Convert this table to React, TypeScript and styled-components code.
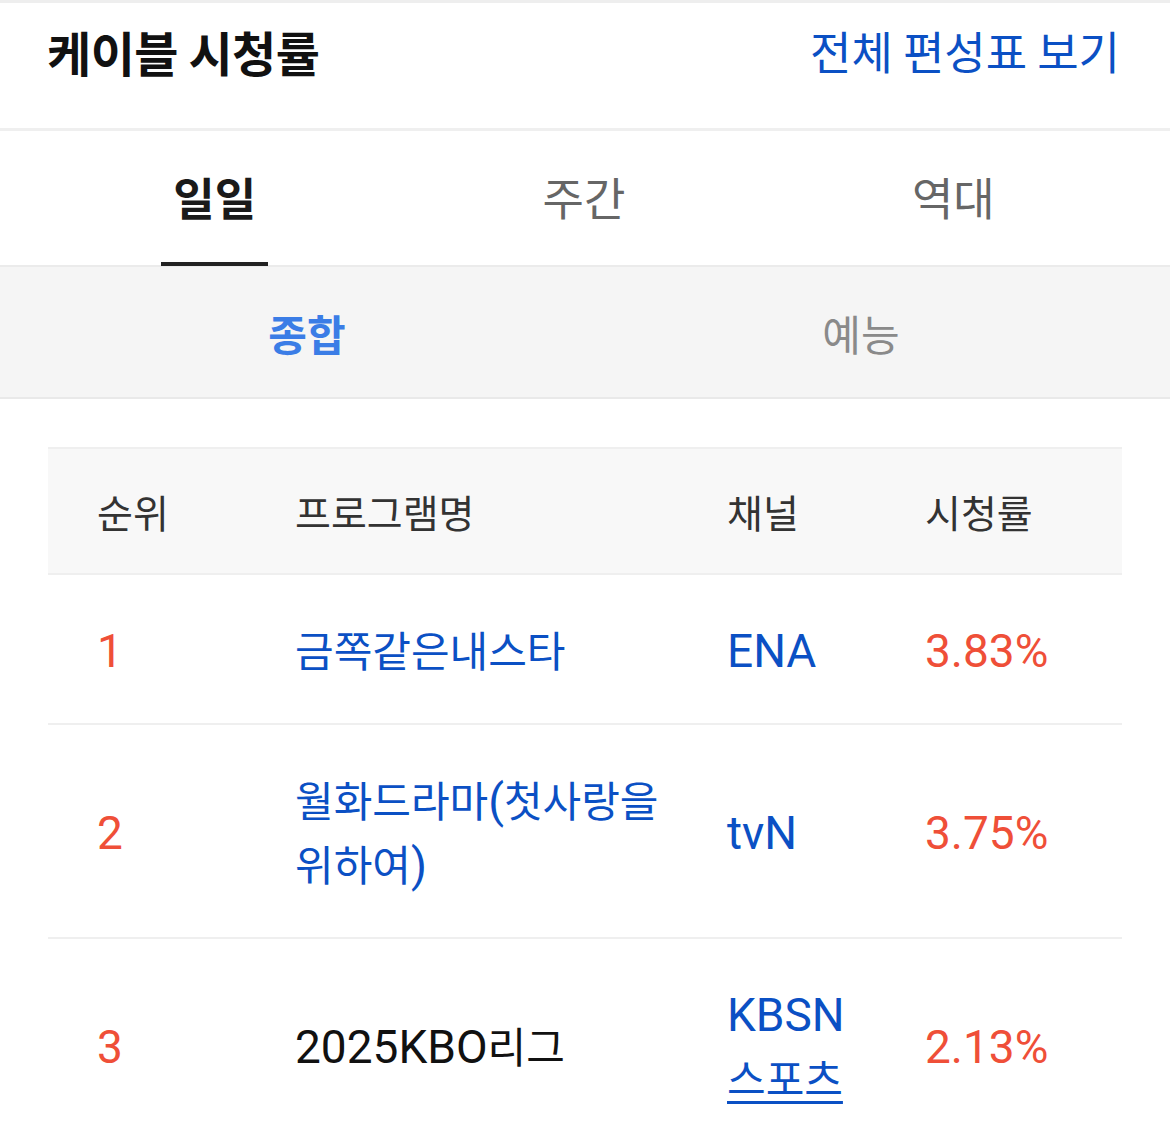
import React from "react";
import styled, { createGlobalStyle } from "styled-components";

const Global = createGlobalStyle`
  html, body { margin: 0; padding: 0; background: #ffffff; }
  body { font-family: "Roboto", "Noto Sans CJK KR", sans-serif; -webkit-font-smoothing: antialiased; }
  * { box-sizing: border-box; }
`;

const Page = styled.div`
  width: 1170px;
  min-height: 1133px;
  background: #fff;
  border-top: 3px solid #eeeeee;
`;

const Header = styled.header`
  height: 128px;
  display: flex;
  align-items: center;
  justify-content: space-between;
  padding: 0 50px 0 47px;
  border-bottom: 3px solid #efefef;
`;

const Title = styled.h1`
  margin: 0;
  font-family: "Noto Sans CJK KR", sans-serif;
  font-size: 48px;
  font-weight: 700;
  color: #111;
  letter-spacing: -0.5px;
  padding-bottom: 30px;
`;

const HeaderLink = styled.a`
  font-family: "Noto Sans CJK KR", sans-serif;
  font-size: 45px;
  font-weight: 400;
  color: #0b50c4;
  text-decoration: none;
  padding-bottom: 30px;
`;

const TabBar = styled.nav`
  display: flex;
  height: 136px;
  padding: 0 32px 0 30px;
  border-bottom: 2px solid #ebebeb;
`;

const Tab = styled.div<{ $active?: boolean }>`
  flex: 1;
  position: relative;
  display: flex;
  align-items: center;
  justify-content: center;
  padding-bottom: 4px;
  font-family: "Noto Sans CJK KR", sans-serif;
  font-size: 45px;
  font-weight: ${(p) => (p.$active ? 700 : 400)};
  color: ${(p) => (p.$active ? "#1a1a1a" : "#666")};
  &::after {
    content: "";
    display: ${(p) => (p.$active ? "block" : "none")};
    position: absolute;
    left: 50%;
    bottom: -1px;
    width: 107px;
    margin-left: -54px;
    height: 4px;
    background: #222;
  }
`;

const SubBar = styled.div`
  display: flex;
  height: 132px;
  padding: 0 32px 0 30px;
  background: #f5f5f5;
  border-bottom: 2px solid #e9e9e9;
`;

const SubTab = styled.div<{ $active?: boolean }>`
  flex: 1;
  display: flex;
  align-items: center;
  justify-content: center;
  font-family: "Noto Sans CJK KR", sans-serif;
  font-size: 42px;
  font-weight: ${(p) => (p.$active ? 700 : 400)};
  color: ${(p) => (p.$active ? "#3b7de6" : "#8a8a8a")};
`;

const Table = styled.div`
  margin: 48px 48px 0 48px;
  border-top: 2px solid #efefef;
`;

const Row = styled.div<{ $head?: boolean }>`
  display: grid;
  grid-template-columns: 198px 432px 198px 246px;
  align-items: center;
  background: ${(p) => (p.$head ? "#f8f8f8" : "#fff")};
  border-bottom: 2px solid #efefef;
  min-height: ${(p) => (p.$head ? "126px" : "148px")};
`;

const HeadCell = styled.div`
  padding-left: 49px;
  font-family: "Noto Sans CJK KR", sans-serif;
  font-size: 39px;
  color: #333;
`;

const Cell = styled.div<{ $tone: "red" | "blue" | "black" }>`
  padding: 42px 0 42px 49px;
  font-family: "Noto Sans CJK KR", sans-serif;
  line-height: 64px;
  font-size: 42px;
  color: ${(p) => (p.$tone === "red" ? "#ef4f38" : p.$tone === "blue" ? "#0b50c4" : "#111")};
`;

const Latin = styled.span`
  font-family: "Roboto", sans-serif;
  font-size: 46px;
  line-height: 1;
`;

const Hangul = styled.span<{ $underline?: boolean }>`
  font-family: "Noto Sans CJK KR", sans-serif;
  text-decoration: ${(p) => (p.$underline ? "underline" : "none")};
  text-underline-offset: 6px;
  text-decoration-thickness: 3px;
`;

export default function App() {
  return (
    <>
      <Global />
      <Page>
        <Header>
          <Title>케이블 시청률</Title>
          <HeaderLink>전체 편성표 보기</HeaderLink>
        </Header>
        <TabBar>
          <Tab $active>일일</Tab>
          <Tab>주간</Tab>
          <Tab>역대</Tab>
        </TabBar>
        <SubBar>
          <SubTab $active>종합</SubTab>
          <SubTab>예능</SubTab>
        </SubBar>
        <Table>
          <Row $head>
            <HeadCell>순위</HeadCell>
            <HeadCell>프로그램명</HeadCell>
            <HeadCell>채널</HeadCell>
            <HeadCell>시청률</HeadCell>
          </Row>
          <Row>
            <Cell $tone="red"><Latin>1</Latin></Cell>
            <Cell $tone="blue"><Hangul>금쪽같은내스타</Hangul></Cell>
            <Cell $tone="blue"><Latin>ENA</Latin></Cell>
            <Cell $tone="red"><Latin>3.83%</Latin></Cell>
          </Row>
          <Row>
            <Cell $tone="red"><Latin>2</Latin></Cell>
            <Cell $tone="blue">
              <Hangul>월화드라마</Hangul><Latin>(</Latin><Hangul>첫사랑을위하여</Hangul><Latin>)</Latin>
            </Cell>
            <Cell $tone="blue"><Latin>tvN</Latin></Cell>
            <Cell $tone="red"><Latin>3.75%</Latin></Cell>
          </Row>
          <Row>
            <Cell $tone="red"><Latin>3</Latin></Cell>
            <Cell $tone="black"><Latin>2025KBO</Latin><Hangul>리그</Hangul></Cell>
            <Cell $tone="blue"><Latin>KBSN</Latin> <Hangul $underline>스포츠</Hangul></Cell>
            <Cell $tone="red"><Latin>2.13%</Latin></Cell>
          </Row>
        </Table>
      </Page>
    </>
  );
}
